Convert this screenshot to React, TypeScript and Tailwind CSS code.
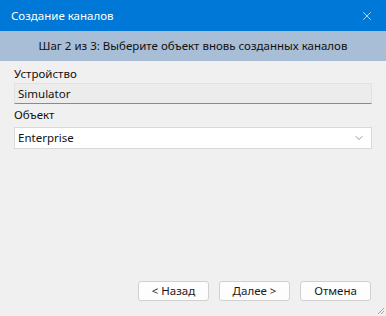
import { ChevronDown, X } from 'lucide-react'

const font = { fontFamily: '"Noto Sans", "Segoe UI", sans-serif' }

function DialogButton({ label }: { label: string }) {
  return (
    <button className="w-[71px] h-[20px] bg-[#fdfdfd] border border-[#d0d0d0] rounded-[3px] text-[11.5px] leading-none text-[#1a1a1a]">
      {label}
    </button>
  )
}

export default function App() {
  return (
    <div className="w-[386px] h-[316px] bg-[#f0f0f0] flex flex-col relative overflow-hidden" style={font}>
      {/* Title bar */}
      <div className="h-[31px] bg-[#0078d7] flex items-center justify-between pl-[11px] pr-[12px] text-white">
        <span className="text-[11.5px]">Создание каналов</span>
        <X className="w-[14px] h-[14px]" strokeWidth={1.2} />
      </div>

      {/* Step header */}
      <div className="h-[30px] bg-[#a8bdd6] flex items-center justify-center text-[11.5px] text-[#111]">
        Шаг 2 из 3: Выберите объект вновь созданных каналов
      </div>

      {/* Form */}
      <div className="flex flex-col px-[14px] pt-[4px]">
        <label className="text-[11.5px] text-[#111] h-[18px] flex items-center">Устройство</label>
        <div className="h-[21px] bg-[#ececec] border border-[#e2e2e2] border-b-[#8a8a8a] flex items-center px-[3px] text-[11.5px] text-[#111]">
          Simulator
        </div>
        <label className="text-[11.5px] text-[#111] h-[18px] mt-[2px] flex items-center">Объект</label>
        <div className="mt-[3px] h-[22px] bg-white border border-[#d9d9d9] flex items-center justify-between pl-[3px] pr-[6px] text-[11.5px] text-[#111]">
          <span>Enterprise</span>
          <ChevronDown className="w-[12px] h-[12px] text-[#555]" strokeWidth={1.2} />
        </div>
      </div>

      <div className="flex-1" />

      {/* Buttons */}
      <div className="flex justify-end gap-[10px] pr-[15px] pb-[15px]">
        <DialogButton label="< Назад" />
        <DialogButton label="Далее >" />
        <DialogButton label="Отмена" />
      </div>

      {/* Resize grip */}
      <svg className="absolute right-[1px] bottom-[1px]" width="10" height="10" viewBox="0 0 10 10">
        <line x1="9" y1="3" x2="3" y2="9" stroke="#9aa7b8" strokeWidth="1" />
        <line x1="9" y1="6" x2="6" y2="9" stroke="#9aa7b8" strokeWidth="1" />
      </svg>
    </div>
  )
}
